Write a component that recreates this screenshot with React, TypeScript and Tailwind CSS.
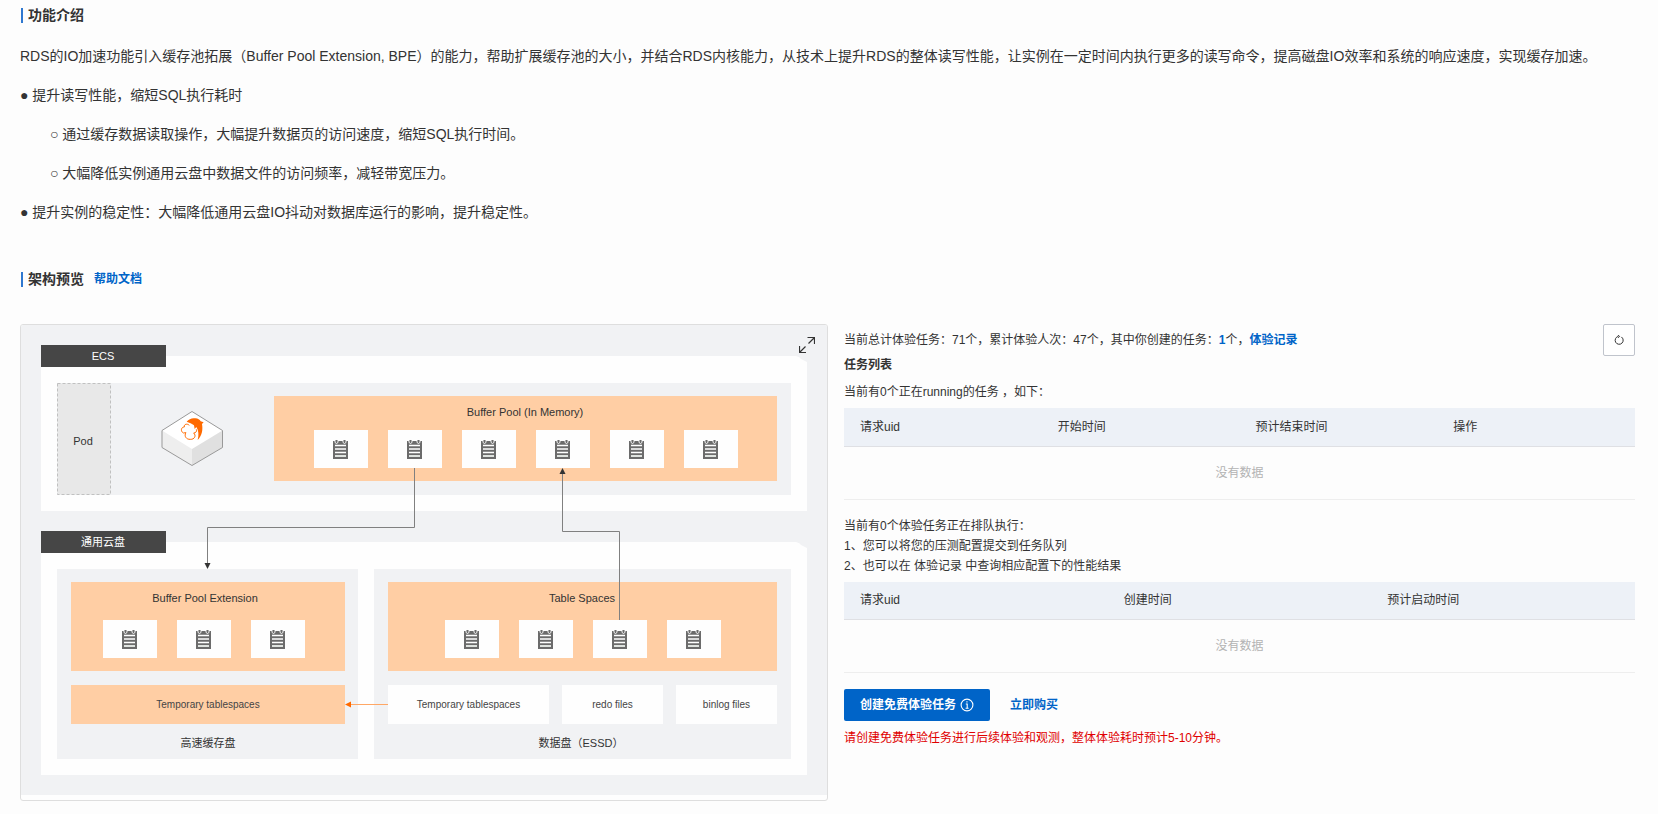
import { useState } from 'react';

const LATIN = '"Liberation Sans", "Noto Sans CJK SC", sans-serif';

const POOL_CELLS = [293, 367, 441, 515, 589, 663];
const EXTENSION_CELLS = [82, 156, 230];
const TABLE_CELLS = [424, 498, 572, 646];

const DISK_FILES = [
    { label: 'Temporary tablespaces', x: 367, width: 161 },
    { label: 'redo files', x: 541, width: 101 },
    { label: 'binlog files', x: 655, width: 101 },
];

function PageCell({ x, y }: { x: number; y: number }) {
    return (
        <g transform={`translate(${x} ${y})`}>
            <rect width="54" height="38" fill="#fefefe" />
            <g transform="translate(19 10)">
                <path d="M0 1h15v18H0z" fill="#6b6b6b" />
                <path d="M2 5.500h11M2 9h11M2 12.500h11" stroke="#fff" strokeWidth="1.3" />
                <path d="M2 16h11" stroke="#dfe3df" strokeWidth="2" />
                <path d="M2 0v2.500q1.500 2 3 0V0M10 0v2.500q1.500 2 3 0V0" fill="#6b6b6b" stroke="#fff" strokeWidth=".9" />
            </g>
        </g>
    );
}

function DatabaseCube() {
    return (
        <g>
            <path d="M171 86.500 201.500 105.500v17L171 140.500 141 122.500v-17z" fill="#fff" />
            <path d="M141 105.500 171 124v16.500l-30-18z" fill="#eee" />
            <path d="M201.500 105.500 171 124v16.500l30.500-18z" fill="#e0e0e0" />
            <path d="M171 86.500 201.500 105.500v17L171 140.500 141 122.500v-17z" fill="none" stroke="#999" strokeWidth="1" />
            <g transform="translate(129 75) scale(.3333)">
                <path
                    d="M118 76C112 70 101 72 103 81C93 81 91 94 100 99L108 98C101 108 109 119 121 118C133 119 140 107 131 99C138 99 141 94 139 88"
                    fill="#fff"
                    stroke="#ff6a00"
                    strokeWidth="3"
                />
                <path
                    d="M110 65C117 57 126 53 136 55C144 55 149 59 152 64L161 67L156 72C159 88 157 106 143 120C147 105 146 92 139 81L134 87L132 76C126 71 118 68 110 65Z"
                    fill="#ff6a00"
                />
            </g>
        </g>
    );
}

function ArchitectureDiagram() {
    return (
        <svg viewBox="0 0 806 470" className="block h-auto w-full" role="img" fontFamily={LATIN} textAnchor="middle">
            <rect width="806" height="470" fill="#f1f2f4" />

            {/* ECS */}
            <path d="M20 31h755q4 1 5 3l6 3v149H20z" fill="#fefefe" />
            <rect x="20" y="20" width="125" height="22" fill="#464646" />
            <text x="82" y="35" fontSize="11" fill="#fff">ECS</text>
            <rect x="36" y="58" width="734" height="112" fill="#f1f2f4" />
            <rect x="36.500" y="58.500" width="53" height="111" fill="#e8e8e8" stroke="#c0c0c0" strokeDasharray="3 2" />
            <text x="62" y="120" fontSize="11" fill="#333">Pod</text>
            <DatabaseCube />
            <rect x="253" y="71" width="503" height="85" fill="#ffcea4" />
            <text x="504" y="91" fontSize="11" fill="#333">Buffer Pool (In Memory)</text>
            {POOL_CELLS.map(x => <PageCell key={x} x={x} y={105} />)}

            {/* Cloud disk */}
            <path d="M20 217h755q4 1 5 3l6 3v227H20z" fill="#fefefe" />
            <rect x="20" y="206" width="125" height="22" fill="#464646" />
            <text x="82" y="221" fontSize="11" fill="#fff">通用云盘</text>
            <rect x="36" y="244" width="301" height="190" fill="#f1f2f4" />
            <rect x="353" y="244" width="417" height="190" fill="#f1f2f4" />

            <rect x="50" y="257" width="274" height="89" fill="#ffcea4" />
            <text x="184" y="277" fontSize="11" fill="#333">Buffer Pool Extension</text>
            {EXTENSION_CELLS.map(x => <PageCell key={x} x={x} y={295} />)}
            <rect x="50" y="360" width="274" height="39" fill="#ffcea4" />
            <text x="187" y="383" fontSize="10" fill="#444">Temporary tablespaces</text>
            <text x="187" y="422" fontSize="11" fill="#333">高速缓存盘</text>

            <rect x="367" y="257" width="389" height="89" fill="#ffcea4" />
            <text x="561" y="277" fontSize="11" fill="#333">Table Spaces</text>
            {TABLE_CELLS.map(x => <PageCell key={x} x={x} y={295} />)}
            {DISK_FILES.map(file => (
                <g key={file.label}>
                    <rect x={file.x} y="360" width={file.width} height="39" fill="#fefefe" />
                    <text x={file.x + file.width / 2} y="383" fontSize="10" fill="#444">{file.label}</text>
                </g>
            ))}
            <text x="560" y="422" fontSize="11" fill="#333">数据盘（ESSD）</text>

            {/* Data flow */}
            <g fill="none" stroke="#808080">
                <path d="M393.500 143v59.500h-207V240" />
                <path d="M598.500 295v-88.500h-57V148" />
                <path d="M367 379.500h-38" stroke="#ffa765" />
            </g>
            <path d="M183.500 238h6l-3 6z" fill="#333" />
            <path d="M538.500 149h6l-3-6z" fill="#333" />
            <path d="M330 376.500v6l-6-3z" fill="#ff6a00" />
        </svg>
    );
}

function SectionTitle({ children }: { children: React.ReactNode }) {
    return (
        <div className="flex items-center gap-[5px] pl-px">
            <span className="h-[15px] w-0.5 bg-[#2f78d0]" />
            <h2 className="text-sm leading-[15px] font-bold">{children}</h2>
        </div>
    );
}

function EmptyTable({ label, columns }: { label: string; columns: string[] }) {
    return (
        <table aria-label={label} className="mt-1.5 w-full table-fixed border-collapse text-left">
            <thead>
                <tr className="h-[38px] border-b border-[#dfe0e4] bg-[#edf1f7]">
                    {columns.map(column => (
                        <th key={column} className="px-4 font-normal">{column}</th>
                    ))}
                </tr>
            </thead>
            <tbody>
                <tr className="h-[53px] border-b border-[#eeeeee]">
                    <td colSpan={columns.length} className="text-center text-[#b3b3b3]">没有数据</td>
                </tr>
            </tbody>
        </table>
    );
}

export default function App() {
    const [expanded, setExpanded] = useState(false);

    return (
        <div lang="zh-CN" className="min-h-screen bg-[#fdfdfd] pt-2 pr-[23px] pb-3 pl-5 font-['Liberation_Sans','Noto_Sans_CJK_SC',sans-serif] text-xs text-[#333333]">
            <SectionTitle>功能介绍</SectionTitle>
            <div className="mt-[23px] flex flex-col gap-[19px] text-sm leading-5">
                <p>
                    RDS的IO加速功能引入缓存池拓展（Buffer Pool Extension, BPE）的能力，帮助扩展缓存池的大小，并结合RDS内核能力，从技术上提升RDS的整体读写性能，让实例在一定时间内执行更多的读写命令，提高磁盘IO效率和系统的响应速度，实现缓存加速。
                </p>
                <p>● 提升读写性能，缩短SQL执行耗时</p>
                <p className="pl-[30px]">○ 通过缓存数据读取操作，大幅提升数据页的访问速度，缩短SQL执行时间。</p>
                <p className="pl-[30px]">○ 大幅降低实例通用云盘中数据文件的访问频率，减轻带宽压力。</p>
                <p>● 提升实例的稳定性：大幅降低通用云盘IO抖动对数据库运行的影响，提升稳定性。</p>
            </div>

            <div className="mt-[50px] flex items-center gap-2.5">
                <SectionTitle>架构预览</SectionTitle>
                <a href="#docs" className="text-xs leading-[15px] font-bold text-[#0064c8]">帮助文档</a>
            </div>

            <div className={expanded ? 'mt-[37px] grid gap-4' : 'mt-[37px] grid grid-cols-[808fr_791fr] items-start gap-4'}>
                <div className="relative overflow-hidden rounded-[3px] border border-[#dedede] bg-[#fefefe] pb-[5px]">
                    <ArchitectureDiagram />
                    <button
                        type="button"
                        aria-label="展开"
                        onClick={() => setExpanded(!expanded)}
                        className="absolute top-3 right-3"
                    >
                        <svg width="16" height="16" viewBox="0 0 16 16" fill="none" stroke="#333" strokeWidth="1.2">
                            <path d="M8.500 .5H15.500v6.500M15.500 .5 9.500 6.500M.5 9V15.500h6.500M.5 15.500l6-6" />
                        </svg>
                    </button>
                </div>

                <div className="leading-5">
                    <div className="flex h-8 items-center justify-between">
                        <p>
                            当前总计体验任务：71个，累计体验人次：47个，其中你创建的任务：
                            <b className="text-[#0064c8]">1</b>个，
                            <a href="#records" className="font-bold text-[#0064c8]">体验记录</a>
                        </p>
                        <button
                            type="button"
                            aria-label="刷新"
                            className="flex size-8 items-center justify-center rounded-xs border border-[#c0c4cc] bg-white"
                        >
                            <svg width="10" height="10" viewBox="0 0 10 10" fill="none" stroke="#333" strokeWidth="1">
                                <path d="M7.300 1.900A4 4 0 1 1 4.200 1.400M3.800 .2 5.500 1.300 4.300 2.800" />
                            </svg>
                        </button>
                    </div>
                    <h3 className="leading-[18px] font-bold">任务列表</h3>
                    <p className="mt-2">当前有0个正在running的任务 ，如下：</p>
                    <EmptyTable label="正在运行的任务" columns={['请求uid', '开始时间', '预计结束时间', '操作']} />

                    <div className="mt-4">
                        <p>当前有0个体验任务正在排队执行：</p>
                        <p>1、您可以将您的压测配置提交到任务队列</p>
                        <p>2、也可以在 体验记录 中查询相应配置下的性能结果</p>
                    </div>
                    <EmptyTable label="排队中的任务" columns={['请求uid', '创建时间', '预计启动时间']} />

                    <div className="mt-4 flex items-center gap-5">
                        <button
                            type="button"
                            className="flex h-8 items-center gap-1 rounded-xs bg-[#0064c8] px-4 font-bold text-white"
                        >
                            创建免费体验任务
                            <svg width="14" height="14" viewBox="0 0 14 14" fill="none" stroke="#fff" strokeWidth="1.100">
                                <circle cx="7" cy="7" r="5.900" />
                                <path d="M5.800 6h1.400v4.300M5.600 10.300h3M6.400 3.900h1.100" />
                            </svg>
                        </button>
                        <a href="#buy" className="font-bold text-[#0064c8]">立即购买</a>
                    </div>
                    <p className="mt-[7px] text-[#e00000]">请创建免费体验任务进行后续体验和观测，整体体验耗时预计5-10分钟。</p>
                </div>
            </div>
        </div>
    );
}
